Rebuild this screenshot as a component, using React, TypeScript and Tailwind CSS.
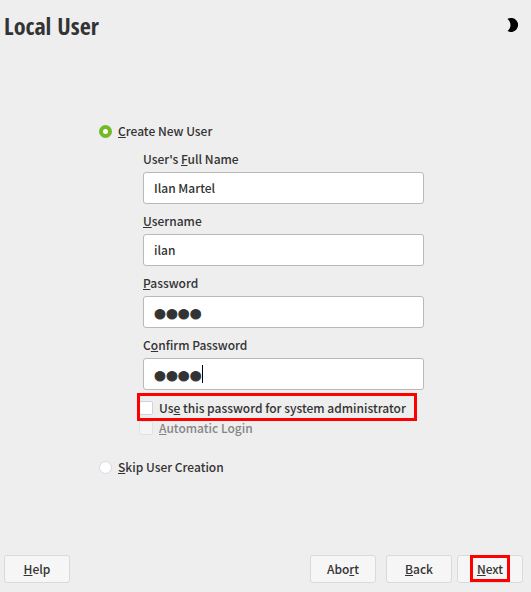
import { useState } from "react";
import type { ReactNode } from "react";

type FieldProps = {
  id: string;
  label: ReactNode;
  type?: string;
  value: string;
  onChange: (value: string) => void;
  showCaret?: boolean;
};

function Key({ children }: { children: ReactNode }) {
  return <span className="underline underline-offset-1">{children}</span>;
}

function Field({
  id,
  label,
  type = "text",
  value,
  onChange,
  showCaret,
}: FieldProps) {
  return (
    <div>
      <label htmlFor={id} className="block pt-[7px] pb-[3px] leading-5">
        {label}
      </label>
      <div className="relative">
        <input
          id={id}
          type={type}
          value={value}
          onChange={(event) => onChange(event.target.value)}
          className={`block h-8 w-full rounded-[3px] border border-[#b9b9b9] bg-white px-2.5 outline-none ${
            type === "password"
              ? "pt-[3px] font-['Liberation_Sans',sans-serif] text-[34px] font-bold [-webkit-text-stroke:1px_#333333]"
              : "pb-0.5"
          }`}
        />
        {showCaret && (
          <span className="absolute top-[7px] left-[59px] h-[18px] w-px bg-black" />
        )}
      </div>
    </div>
  );
}

type ModeProps = {
  id: string;
  checked: boolean;
  onChange: () => void;
  children: ReactNode;
};

function ModeRadio({ id, checked, onChange, children }: ModeProps) {
  return (
    <div className="flex h-5 items-center gap-1.5">
      <input
        id={id}
        type="radio"
        name="mode"
        checked={checked}
        onChange={onChange}
        className="size-[13px] appearance-none rounded-full border border-[#d5d9e2] bg-white checked:border-4 checked:border-[#73ba25]"
      />
      <label htmlFor={id} className="leading-5">
        {children}
      </label>
    </div>
  );
}

const checkboxStyle =
  "size-[14px] appearance-none rounded-[2px] border border-[#cdd3e2] bg-white checked:bg-[#73ba25] disabled:border-[#dfe2ea] disabled:bg-[#f4f4f4]";

const buttonStyle =
  "h-7 w-[66px] rounded-[3px] border border-[#dadada] bg-[#f6f6f6] leading-5";

export default function App() {
  const [mode, setMode] = useState("create");
  const [fullName, setFullName] = useState("Ilan Martel");
  const [username, setUsername] = useState("ilan");
  const [password, setPassword] = useState("ilan");
  const [confirm, setConfirm] = useState("ilan");
  const [sameForRoot, setSameForRoot] = useState(false);

  return (
    <div className="flex min-h-screen flex-col bg-[#eeeeee] font-['Noto_Sans_CJK_SC',sans-serif] text-xs font-medium text-[#333333]">
      <header className="flex h-[50px] items-center justify-between pr-3 pl-1">
        <h1 className="pt-0.5 font-['Open_Sans_Condensed','Noto_Sans_Condensed','Noto_Sans_CJK_SC',sans-serif] text-2xl font-bold">
          Local User
        </h1>
        <button type="button" aria-label="Toggle dark theme">
          <svg width="12" height="14" viewBox="0 0 12 14">
            <path d="M.5 1A7 7 0 1 1 .5 13A7.5 7.5 0 0 0 .5 1Z" fill="#000" />
          </svg>
        </button>
      </header>

      <main className="flex flex-1 items-center justify-center">
        <form className="w-full max-w-[333px]">
          <ModeRadio
            id="create"
            checked={mode === "create"}
            onChange={() => setMode("create")}
          >
            <Key>C</Key>reate New User
          </ModeRadio>

          <div className="mt-px mr-2 ml-11">
            <Field
              id="fullName"
              label={
                <>
                  User's <Key>F</Key>ull Name
                </>
              }
              value={fullName}
              onChange={setFullName}
            />
            <Field
              id="username"
              label={
                <>
                  <Key>U</Key>sername
                </>
              }
              value={username}
              onChange={setUsername}
            />
            <Field
              id="password"
              type="password"
              label={
                <>
                  <Key>P</Key>assword
                </>
              }
              value={password}
              onChange={setPassword}
            />
            <Field
              id="confirm"
              type="password"
              label={
                <>
                  C<Key>o</Key>nfirm Password
                </>
              }
              value={confirm}
              onChange={setConfirm}
              showCaret
            />
          </div>

          <div className="mt-2 mr-2 ml-10">
            <div className="relative flex h-5 items-center gap-1.5">
              <input
                id="root"
                type="checkbox"
                checked={sameForRoot}
                onChange={() => setSameForRoot(!sameForRoot)}
                className={checkboxStyle}
              />
              <label htmlFor="root" className="leading-5 whitespace-nowrap">
                Us<Key>e</Key> this password for system administrator
              </label>
              <span className="pointer-events-none absolute -top-[5px] right-[7px] -left-[2px] h-7 border-[3px] border-[#fe0000]" />
            </div>
            <div className="flex h-5 items-center gap-1.5">
              <input
                id="autologin"
                type="checkbox"
                disabled
                className={checkboxStyle}
              />
              <label htmlFor="autologin" className="leading-5 text-[#858585]">
                <Key>A</Key>utomatic Login
              </label>
            </div>
          </div>

          <div className="mt-[19px]">
            <ModeRadio
              id="skip"
              checked={mode === "skip"}
              onChange={() => setMode("skip")}
            >
              <Key>S</Key>kip User Creation
            </ModeRadio>
          </div>
        </form>
      </main>

      <footer className="flex h-11 items-start pt-[7px] pr-2 pl-1">
        <button type="button" className={buttonStyle}>
          <Key>H</Key>elp
        </button>
        <button type="button" className={`${buttonStyle} ml-auto`}>
          Abo<Key>r</Key>t
        </button>
        <button type="button" className={`${buttonStyle} ml-2.5`}>
          <Key>B</Key>ack
        </button>
        <button type="button" className={`${buttonStyle} relative ml-[5px]`}>
          <Key>N</Key>ext
          <span className="pointer-events-none absolute -top-px left-[12px] h-[27px] w-10 border-[3px] border-[#fe0000]" />
        </button>
      </footer>
    </div>
  );
}
